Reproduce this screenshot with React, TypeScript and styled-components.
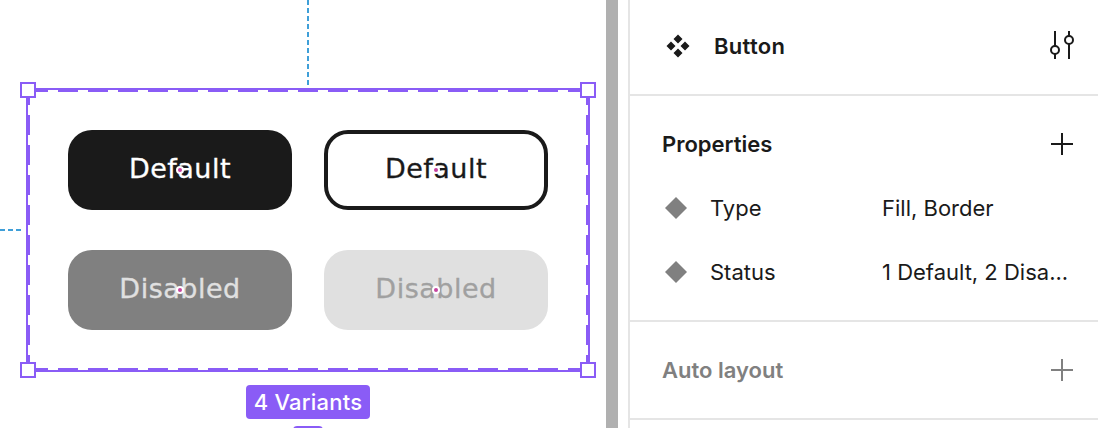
import React from "react";
import styled, { createGlobalStyle } from "styled-components";

const Global = createGlobalStyle`
  html, body { margin: 0; padding: 0; background: #fff; }
  body { width: 1098px; height: 428px; overflow: hidden; font-family: "Inter", "Liberation Sans", sans-serif; }
`;

const purple = "#8a5cf6";
const blue = "#3f9fd8";

const Page = styled.div`
  display: flex;
  width: 1098px;
  height: 428px;
  overflow: hidden;
`;

const Canvas = styled.div`
  width: 606px;
  flex: none;
  padding-left: 26px;
  box-sizing: border-box;
`;

const Stack = styled.div`
  width: 564px;
  display: flex;
  flex-direction: column;
  align-items: center;
`;

const Connector = styled.div`
  width: 2px;
  height: 88px;
  background: repeating-linear-gradient(to bottom, ${blue} 0 5px, transparent 5px 8px);
`;

const SideConnector = styled.div`
  position: absolute;
  left: -28px;
  top: 50%;
  margin-top: -1px;
  width: 24px;
  height: 2px;
  background: repeating-linear-gradient(to right, ${blue} 0 5px, transparent 5px 8px);
`;

const Frame = styled.div`
  position: relative;
  width: 564px;
  height: 284px;
  box-sizing: border-box;
  border: 2px solid ${purple};
  padding: 40px;
  display: grid;
  grid-template-columns: 224px 224px;
  grid-auto-rows: 80px;
  gap: 40px 32px;
  &::before {
    content: "";
    position: absolute;
    inset: 0;
    pointer-events: none;
    background:
      linear-gradient(to right, ${purple} 20px, transparent 20px) 0 0 / 30px 2px repeat-x,
      linear-gradient(to right, ${purple} 20px, transparent 20px) 0 100% / 30px 2px repeat-x,
      linear-gradient(to bottom, ${purple} 20px, transparent 20px) 0 -5px / 2px 30px repeat-y,
      linear-gradient(to bottom, ${purple} 20px, transparent 20px) 100% -5px / 2px 30px repeat-y;
  }
`;

const Handle = styled.span<{ $v: "top" | "bottom"; $h: "left" | "right" }>`
  position: absolute;
  ${(p) => p.$v}: -8px;
  ${(p) => p.$h}: -8px;
  width: 16px;
  height: 16px;
  box-sizing: border-box;
  background: #fff;
  border: 2px solid ${purple};
  z-index: 2;
`;

const variants = {
  fill: "background:#1a1a1a;color:#fff;",
  border: "background:#fff;color:#1a1a1a;border:4px solid #1a1a1a;",
  mid: "background:#808080;color:#e0e0e0;",
  light: "background:#e0e0e0;color:#a0a0a0;",
};

const Variant = styled.div<{ $kind: keyof typeof variants }>`
  position: relative;
  box-sizing: border-box;
  display: flex;
  align-items: center;
  justify-content: center;
  padding-bottom: 3px;
  border-radius: 24px;
  font-family: "DejaVu Sans", sans-serif;
  font-size: 27px;
  letter-spacing: 0.5px;
  -webkit-text-stroke: 0.3px currentColor;
  ${(p) => variants[p.$kind]}
`;

const Dot = styled.span`
  position: absolute;
  left: 50%;
  top: 50%;
  width: 4px;
  height: 4px;
  margin: -2px 0 0 -2px;
  border-radius: 50%;
  background: #c6439f;
  box-shadow: 0 0 0 2px #fff;
`;

const Badge = styled.div`
  margin-top: 13px;
  height: 34px;
  width: 124px;
  display: flex;
  align-items: center;
  justify-content: center;
  border-radius: 4px;
  background: ${purple};
  color: #fff;
  font-size: 22px;
  font-weight: 500;
  letter-spacing: 0.2px;
`;

const BadgeTab = styled.div`
  margin-top: 7px;
  width: 30px;
  height: 10px;
  flex: none;
  border-radius: 4px;
  background: ${purple};
`;

const Scrollbar = styled.div`
  width: 12px;
  flex: none;
  background: #b0b0b0;
`;

const Gutter = styled.div`
  width: 10px;
  flex: none;
  background: #fff;
`;

const Panel = styled.aside`
  flex: 1;
  min-width: 0;
  border-left: 2px solid #e5e5e5;
  color: #1a1a1a;
`;

const Section = styled.section<{ $head?: boolean }>`
  border-bottom: 2px solid #e5e5e5;
  box-sizing: border-box;
  padding: ${(p) => (p.$head ? "0 22px 2px 35px" : "16px 25px 16px 32px")};
  ${(p) => p.$head && "height: 96px; display: flex; align-items: center;"}
`;

const HeadRow = styled.div<{ $muted?: boolean }>`
  height: 64px;
  display: flex;
  align-items: center;
  justify-content: space-between;
  color: ${(p) => (p.$muted ? "#808080" : "#1a1a1a")};
  font-size: 22px;
  font-weight: 600;
`;

const Title = styled.div`
  display: flex;
  align-items: center;
  flex: 1;
  gap: 23px;
  font-size: 22px;
  font-weight: 600;
  letter-spacing: 0.3px;
`;

const PropRow = styled.div`
  height: 64px;
  display: grid;
  grid-template-columns: 48px 172px 188px;
  align-items: center;
  font-size: 22px;
`;

const PropValue = styled.span`
  white-space: nowrap;
`;

const DiamondIcon = styled.svg`
  display: block;
  width: 28px;
  height: 28px;
`;

const IconSvg = styled.svg`
  display: block;
  flex: none;
`;

const Components = () => (
  <IconSvg width="26" height="26" viewBox="0 0 26 26" fill="#1a1a1a">
    <path d="M13 2.500l4.500 4.500L13 11.500 8.500 7zM6 9.500l4.500 4.500L6 18.500 1.500 14zM20 9.500l4.500 4.500-4.500 4.500-4.500-4.500zM13 16.500l4.500 4.500-4.500 4.500L8.500 21z" transform="translate(0 -1)" />
  </IconSvg>
);

const Tune = () => (
  <IconSvg width="28" height="32" viewBox="0 0 28 32" fill="#fff" stroke="#1a1a1a" strokeWidth="2">
    <path d="M7 1v28M21 1v28" fill="none" />
    <circle cx="7" cy="20" r="4" />
    <circle cx="21" cy="10" r="4" />
  </IconSvg>
);

const Plus = ({ color }: { color: string }) => (
  <IconSvg width="22" height="22" viewBox="0 0 22 22" stroke={color} strokeWidth="2">
    <path d="M0 11h22M11 0v22" />
  </IconSvg>
);

const Diamond = () => (
  <DiamondIcon viewBox="0 0 28 28" fill="#808080">
    <path d="M14 3l11 11-11 11L3 14z" />
  </DiamondIcon>
);

const props = [
  ["Type", "Fill, Border"],
  ["Status", "1 Default, 2 Disa..."],
];

export default function App() {
  return (
    <Page>
      <Global />
      <Canvas>
        <Stack>
          <Connector />
          <Frame>
            <SideConnector />
            <Handle $v="top" $h="left" />
            <Handle $v="top" $h="right" />
            <Handle $v="bottom" $h="left" />
            <Handle $v="bottom" $h="right" />
            <Variant $kind="fill">Default<Dot /></Variant>
            <Variant $kind="border">Default<Dot /></Variant>
            <Variant $kind="mid">Disabled<Dot /></Variant>
            <Variant $kind="light">Disabled<Dot /></Variant>
          </Frame>
          <Badge>4 Variants</Badge>
          <BadgeTab />
        </Stack>
      </Canvas>
      <Scrollbar />
      <Gutter />
      <Panel>
        <Section $head>
          <Title><Components />Button</Title>
          <Tune />
        </Section>
        <Section>
          <HeadRow>Properties<Plus color="#1a1a1a" /></HeadRow>
          {props.map(([name, value]) => (
            <PropRow key={name}>
              <Diamond />
              <span>{name}</span>
              <PropValue>{value}</PropValue>
            </PropRow>
          ))}
        </Section>
        <Section>
          <HeadRow $muted>Auto layout<Plus color="#808080" /></HeadRow>
        </Section>
      </Panel>
    </Page>
  );
}
